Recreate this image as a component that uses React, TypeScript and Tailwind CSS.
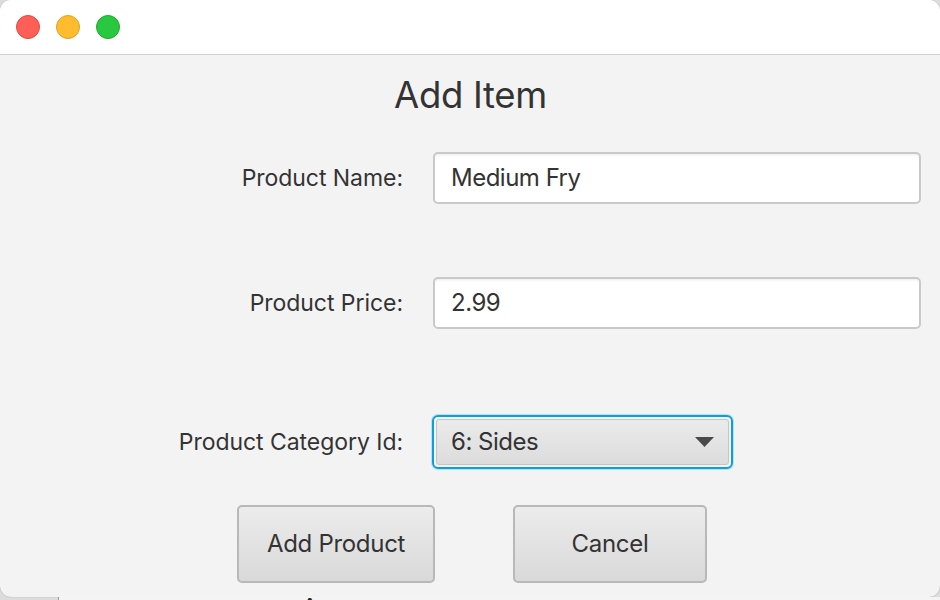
import React from "react";

const font = { fontFamily: "Inter, 'Noto Sans', sans-serif" };

function Field({ value }: { value: string }) {
  return (
    <div className="w-[488px] h-[52px] rounded-[5px] border-2 border-[#c9c9c9] bg-white shadow-[inset_0_3px_3px_-2px_rgba(0,0,0,0.08)] flex items-center pl-[16px] text-[24px] text-[#333333] tracking-[-0.5px]">
      {value}
    </div>
  );
}

function Label({ text }: { text: string }) {
  return (
    <div className="w-[403px] text-right text-[23px] text-[#333333] tracking-[-0.05px]">{text}</div>
  );
}

export default function App() {
  return (
    <div className="w-[940px] h-[600px] overflow-hidden bg-[#dcdcdc] relative" style={font}>
      <div className="w-[940px] h-[597px] rounded-[11px] overflow-hidden bg-[#f3f3f3] flex flex-col shadow-[0_0_1px_rgba(0,0,0,0.4)]">
        <div className="h-[55px] bg-white border-b border-[#cfcfcf] flex items-center pl-[16px] gap-[16px] shrink-0">
          <div className="w-[24px] h-[24px] rounded-full bg-[#ff5f57] border border-[#e2463f]" />
          <div className="w-[24px] h-[24px] rounded-full bg-[#febc2e] border border-[#dea123]" />
          <div className="w-[24px] h-[24px] rounded-full bg-[#28c840] border border-[#1aab29]" />
        </div>
        <div className="flex flex-col">
          <div className="h-[80px] flex items-center justify-center text-[36.5px] text-[#333333] tracking-[-0.3px] pt-[1px] pl-[1px]">
            Add Item
          </div>
          <div className="flex items-center mt-[17px]">
            <Label text="Product Name:" />
            <div className="ml-[30px]"><Field value="Medium Fry" /></div>
          </div>
          <div className="flex items-center mt-[73px]">
            <Label text="Product Price:" />
            <div className="ml-[30px]"><Field value="2.99" /></div>
          </div>
          <div className="flex items-center mt-[86px]">
            <Label text="Product Category Id:" />
            <div className="ml-[29px] w-[301px] h-[54px] rounded-[6px] border-2 border-[#0aa0d8] shadow-[0_0_0_1px_rgba(120,200,235,0.45)] p-[2px]">
              <div className="w-full h-full rounded-[3px] border border-[#c5c5c5] bg-gradient-to-b from-[#ebebeb] to-[#dcdcdc] flex items-center justify-between pl-[14px] pr-[14px] text-[24px] text-[#333333] tracking-[-0.5px]">
                <span>6: Sides</span>
                <svg width="19" height="10" viewBox="0 0 19 10"><polygon points="0,0 19,0 9.5,10" fill="#4a4a4a" /></svg>
              </div>
            </div>
          </div>
          <div className="flex mt-[36px] pl-[237px] gap-[78px]">
            <button className="w-[198px] h-[78px] rounded-[5px] border-2 border-[#b8b8b8] bg-gradient-to-b from-[#ececec] to-[#d9d9d9] text-[24px] text-[#333333] tracking-[-0.3px]" style={font}>
              Add Product
            </button>
            <button className="w-[194px] h-[78px] rounded-[5px] border-2 border-[#b8b8b8] bg-gradient-to-b from-[#ececec] to-[#d9d9d9] text-[24px] text-[#333333] tracking-[-0.3px]" style={font}>
              Cancel
            </button>
          </div>
        </div>
      </div>
      <div className="h-[3px] bg-[#f4f4f4] relative overflow-hidden border-l border-[#9a9a9a] ml-[58px]">
        <div className="absolute left-[206px] top-[-1px] text-[26px] font-bold text-[#222] leading-[28px]">Delivery Summary</div>
      </div>
    </div>
  );
}
